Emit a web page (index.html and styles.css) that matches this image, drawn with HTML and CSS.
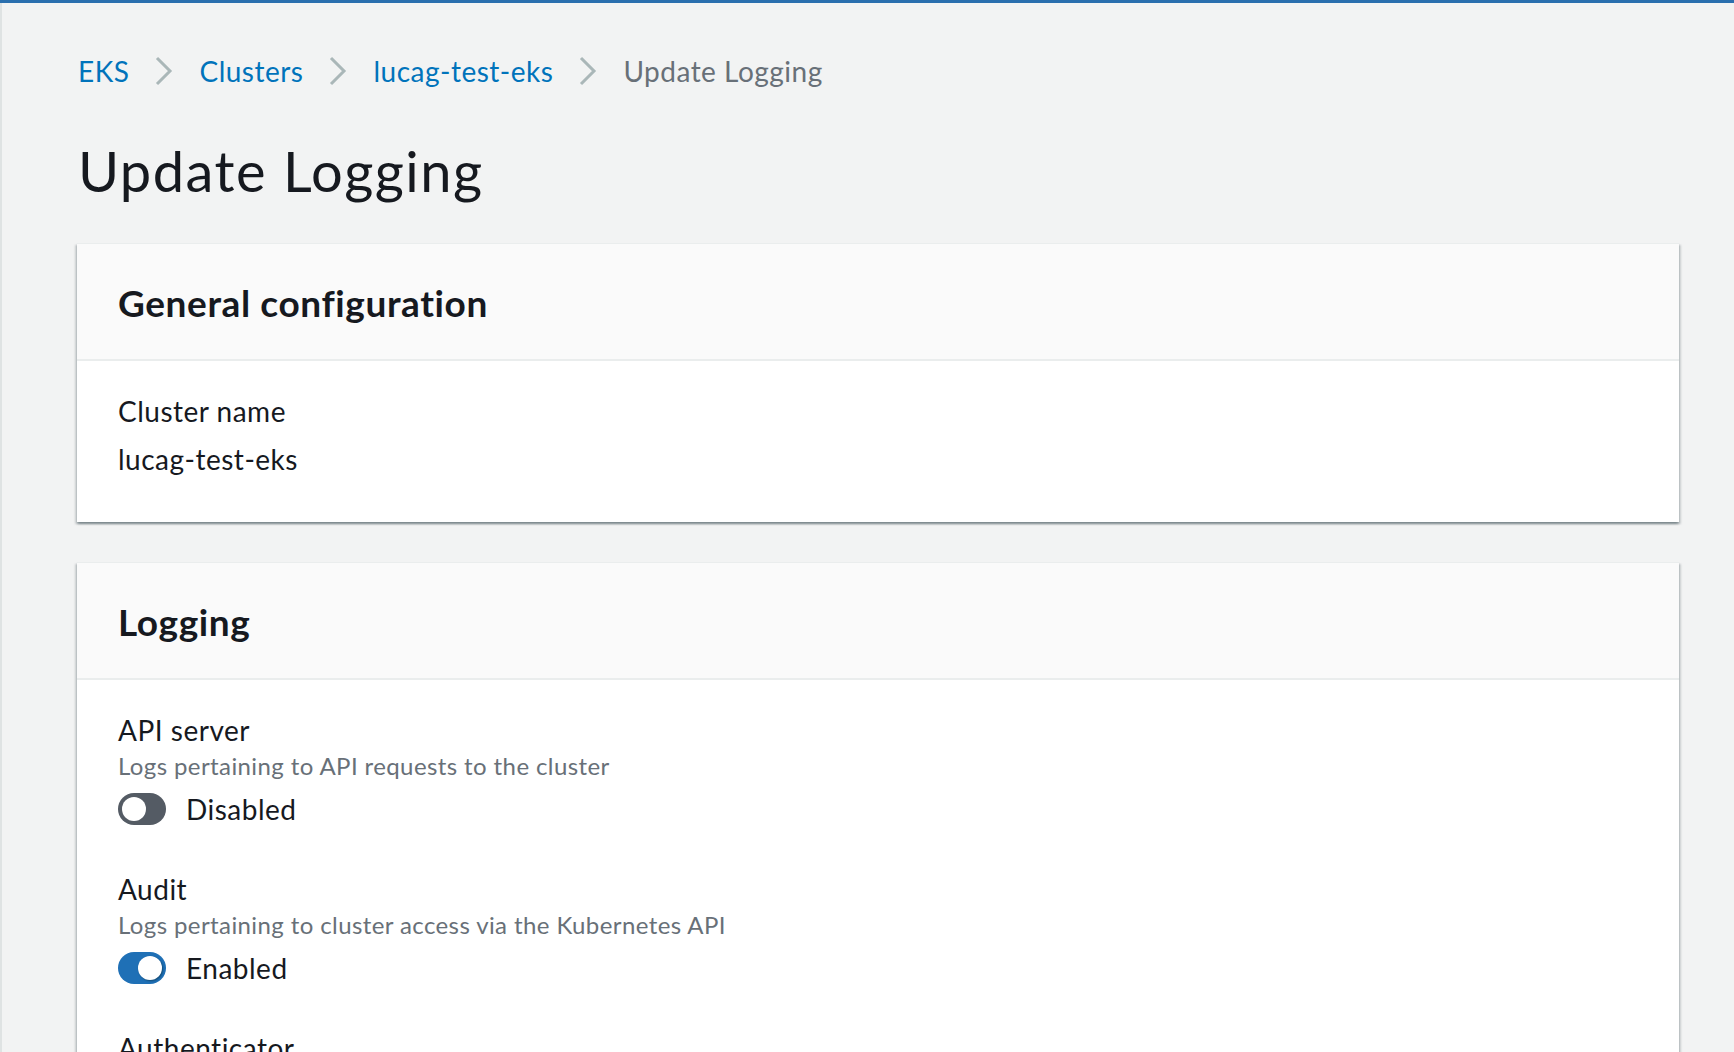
FILE: index.html
```html
<!DOCTYPE html>
<html lang="en">
<head>
<meta charset="utf-8">
<title>Update Logging</title>
<link rel="stylesheet" href="styles.css">
</head>
<body>
<div class="page">
  <nav class="breadcrumbs">
    <a class="crumb" href="#">EKS</a>
    <svg class="chev" width="18" height="30" viewBox="0 0 18 30"><path d="M2 2 L15 15 L2 28" fill="none" stroke="#aab7b8" stroke-width="3"/></svg>
    <a class="crumb" href="#">Clusters</a>
    <svg class="chev" width="18" height="30" viewBox="0 0 18 30"><path d="M2 2 L15 15 L2 28" fill="none" stroke="#aab7b8" stroke-width="3"/></svg>
    <a class="crumb" href="#">lucag-test-eks</a>
    <svg class="chev" width="18" height="30" viewBox="0 0 18 30"><path d="M2 2 L15 15 L2 28" fill="none" stroke="#aab7b8" stroke-width="3"/></svg>
    <span class="crumb current">Update Logging</span>
  </nav>

  <h1 class="title">Update Logging</h1>

  <section class="card">
    <div class="card-header"><h2>General configuration</h2></div>
    <div class="card-body">
      <div class="label">Cluster name</div>
      <div class="value">lucag-test-eks</div>
    </div>
  </section>

  <section class="card">
    <div class="card-header"><h2>Logging</h2></div>
    <div class="card-body log-body">
      <div class="item">
        <div class="label">API server</div>
        <div class="desc">Logs pertaining to API requests to the cluster</div>
        <div class="toggle-row"><span class="toggle"><span class="knob"></span></span><span class="toggle-text">Disabled</span></div>
      </div>
      <div class="item">
        <div class="label">Audit</div>
        <div class="desc">Logs pertaining to cluster access via the Kubernetes API</div>
        <div class="toggle-row"><span class="toggle on"><span class="knob"></span></span><span class="toggle-text">Enabled</span></div>
      </div>
      <div class="item">
        <div class="label">Authenticator</div>
        <div class="desc">Logs pertaining to authentication requests into the cluster</div>
        <div class="toggle-row"><span class="toggle"><span class="knob"></span></span><span class="toggle-text">Disabled</span></div>
      </div>
    </div>
  </section>
</div>
</body>
</html>
```

FILE: styles.css
```css
html, body {
  margin: 0;
  padding: 0;
}
body {
  background: #f2f3f3;
  font-family: "Lato", "Open Sans", sans-serif;
  color: #16191f;
  border-top: 3px solid #2a6fae;
  box-shadow: inset 2px 0 0 #dfe3e3;
  min-height: 1049px;
  overflow: hidden;
}
.page {
  padding: 48px 55px 0 77px;
}
.breadcrumbs {
  display: flex;
  align-items: center;
  gap: 26px;
  height: 40px;
  padding-left: 1px;
}
.crumb {
  font-size: 28px;
  line-height: 40px;
  letter-spacing: 0.5px;
  color: #0073bb;
  text-decoration: none;
}
.crumb.current {
  color: #687078;
}
.chev {
  display: block;
}
.title {
  margin: 48px 0 40px 1px;
  font-size: 56px;
  line-height: 64px;
  font-weight: 400;
  letter-spacing: 1.5px;
}
.card {
  background: #fff;
  border-top: 1px solid #eaeded;
  box-shadow: 0 2px 2px 0 rgba(0, 28, 36, 0.3), 2px 2px 2px 0 rgba(0, 28, 36, 0.15), -2px 2px 2px 0 rgba(0, 28, 36, 0.15);
  margin-bottom: 40px;
}
.card-header {
  background: #fafafa;
  border-bottom: 2px solid #eaeded;
  padding: 37px 40px 34px 41px;
}
.card-header h2 {
  margin: 0;
  font-size: 37px;
  line-height: 44px;
  font-weight: 700;
  letter-spacing: 0.6px;
}
.card-body {
  padding: 30px 40px 43px 41px;
}
.label {
  font-size: 28px;
  line-height: 40px;
  letter-spacing: 0.5px;
}
.value {
  margin-top: 8px;
  font-size: 28px;
  line-height: 40px;
  letter-spacing: 0.5px;
}
.item + .item {
  margin-top: 40px;
}
.desc {
  font-size: 24px;
  line-height: 32px;
  letter-spacing: 0.4px;
  color: #687078;
}
.toggle-row {
  display: flex;
  align-items: center;
  gap: 20px;
  margin-top: 7px;
  height: 40px;
}
.toggle {
  position: relative;
  display: block;
  width: 48px;
  height: 32px;
  border-radius: 16px;
  background: #545b64;
  flex: none;
}
.toggle .knob {
  position: absolute;
  top: 4px;
  left: 4px;
  width: 24px;
  height: 24px;
  border-radius: 50%;
  background: #fff;
}
.toggle.on {
  background: #1f70b6;
}
.toggle.on .knob {
  left: 20px;
  box-shadow: 1px 1px 2px rgba(0, 28, 36, 0.45);
}
.toggle-text {
  font-size: 28px;
  line-height: 40px;
  letter-spacing: 0.5px;
}
```
